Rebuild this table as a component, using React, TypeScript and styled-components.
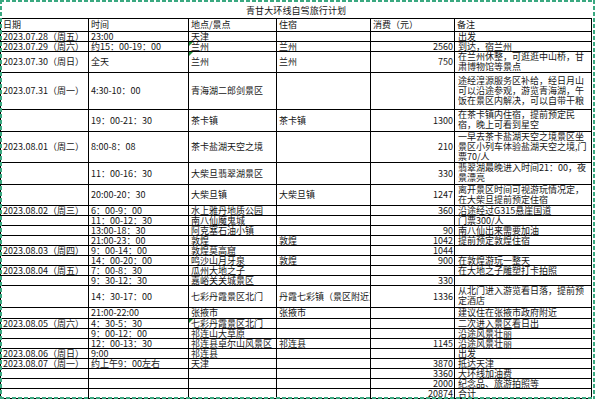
import styled, { createGlobalStyle } from "styled-components";

type Row = {
  h: number;
  date?: string;
  time?: string;
  place?: string;
  stay?: string;
  cost?: string;
  note?: string;
  mark?: boolean;
};

const rows: Row[] = [
  { h: 10, date: "2023.07.28（周五）", time: "23:00", place: "天津", note: "出发" },
  { h: 10, date: "2023.07.29（周六）", time: "约15：00-19：00", place: "兰州", stay: "兰州", cost: "2560", note: "到达，宿兰州", mark: true },
  { h: 21, date: "2023.07.30（周日）", time: "全天", place: "兰州", stay: "兰州", cost: "750", note: "在兰州休整，可逛逛中山桥，甘肃博物馆等景点", mark: true },
  { h: 37, date: "2023.07.31（周一）", time: "4:30-10：00", place: "青海湖二郎剑景区", note: "途经湟源服务区补给，经日月山可以沿途参观，游览青海湖，午饭在景区内解决，可以自带干粮" },
  { h: 22, time: "19：00-21：30", place: "茶卡镇", stay: "茶卡镇", cost: "1300", note: "在茶卡镇内住宿，提前预定民宿，晚上可看到星空" },
  { h: 31, date: "2023.08.01（周二）", time: "8:00-8：08", place: "茶卡盐湖天空之境", cost: "210", note: "一早去茶卡盐湖天空之境景区坐景区小列车体验盐湖天空之境,门票70/人" },
  { h: 22, time: "11：00-16：30", place: "大柴旦翡翠湖景区", cost: "330", note: "翡翠湖最晚进入时间21：00，夜景漂亮" },
  { h: 21, time: "20:00-20：30", place: "大柴旦镇", stay: "大柴旦镇", cost: "1247", note: "离开景区时间可视游玩情况定，在大柴旦提前预定住宿" },
  { h: 10, date: "2023.08.02（周三）", time: "6：00-9：00", place: "水上雅丹地质公园", cost: "360", note: "沿途经过G315悬崖国道" },
  { h: 10, time: "11：00-12：30", place: "南八仙魔鬼城", note: "门票300/人" },
  { h: 10, time: "13:00-18：30", place: "阿克塞石油小镇", cost: "90", note: "南八仙出来需要加油" },
  { h: 10, time: "21:00-23：00", place: "敦煌", stay: "敦煌", cost: "1042", note: "提前预定敦煌住宿" },
  { h: 10, date: "2023.08.03（周四）", time: "9：00-14：00", place: "敦煌莫高窟", cost: "1044" },
  { h: 10, time: "14：00-20：00", place: "鸣沙山月牙泉", stay: "敦煌", cost: "900", note: "在敦煌游玩一整天" },
  { h: 10, date: "2023.08.04（周五）", time: "7：00-8：30", place: "瓜州大地之子", note: "在大地之子雕塑打卡拍照" },
  { h: 10, time: "9：30-12：30", place: "嘉峪关关城景区", cost: "330" },
  { h: 22, time: "14：30-17：00", place: "七彩丹霞景区北门", stay: "丹霞七彩镇（景区附近）", cost: "1336", note: "从北门进入游览看日落，提前预定酒店" },
  { h: 11, time: "21:00-22:00", place: "张掖市", stay: "张掖市", note: "建议住在张掖市政府附近" },
  { h: 10, date: "2023.08.05（周六）", time: "4：30-5：30", place: "七彩丹霞景区北门", note: "二次进入景区看日出", mark: true },
  { h: 10, time: "9：00-12：00", place: "祁连山大草原", note: "沿途风景壮丽" },
  { h: 10, time: "12：00-13：30", place: "祁连县卓尔山风景区", stay: "祁连县", cost: "1145", note: "沿途风景壮丽" },
  { h: 10, date: "2023.08.06（周日）", time: "9:00", place: "祁连县", note: "出发" },
  { h: 10, date: "2023.08.07（周一）", time: "约上午9：00左右", place: "天津", cost: "3870", note: "抵达天津" },
  { h: 10, cost: "3360", note: "大环线加油费" },
  { h: 10, cost: "2000", note: "纪念品、旅游拍照等" },
  { h: 10, cost: "20874", note: "合计" },
];

const colWidths = [88, 100, 88, 94, 84, 137];
const heads = ["日期", "时间", "地点/景点", "住宿", "消费（元）", "备注"];

const App = () => {
  return (
    <Page>
      <GlobalStyle />
      <Sheet>
        <colgroup>
          {colWidths.map((w, i) => (
            <Col key={i} $w={w} />
          ))}
        </colgroup>
        <tbody>
          <SheetRow $h={18}>
            <TitleCell colSpan={6}>青甘大环线自驾旅行计划</TitleCell>
          </SheetRow>
          <SheetRow $h={13}>
            {heads.map((t) => (
              <HeadCell key={t}>{t}</HeadCell>
            ))}
          </SheetRow>
          {rows.map((r, i) => (
            <SheetRow key={i} $h={r.h}>
              <Cell>{r.date}</Cell>
              <Cell>{r.time}</Cell>
              <Cell>
                {r.mark && <ErrorMark />}
                {r.place}
              </Cell>
              <Cell>{r.stay}</Cell>
              <Cell $align="right">{r.cost}</Cell>
              <NoteCell $tight={r.h <= 11}>{r.note}</NoteCell>
            </SheetRow>
          ))}
        </tbody>
      </Sheet>
      <PageBreak />
    </Page>
  );
};

export default App;

const GlobalStyle = createGlobalStyle`
  body {
    margin: 0;
    background: #fff;
  }
`;

const Page = styled.div`
  position: relative;
  width: 596px;
  height: 400px;
  overflow: hidden;
  background: #fff;
`;

const Sheet = styled.table`
  border-collapse: collapse;
  table-layout: fixed;
  width: 591px;
  font-family: "Noto Sans CJK SC", "Noto Sans", sans-serif;
  font-size: 9px;
  line-height: 9px;
  color: #151515;
`;

const Col = styled.col<{ $w: number }>`
  width: ${(p) => p.$w}px;
`;

const SheetRow = styled.tr<{ $h: number }>`
  height: ${(p) => p.$h}px;
`;

const TitleCell = styled.td`
  padding: 3px 0 0;
  text-align: center;
  vertical-align: middle;
  letter-spacing: 0.1px;
`;

const HeadCell = styled.th`
  border: 1px solid #000;
  padding: 0 1px 0 2px;
  font-weight: 400;
  text-align: left;
  vertical-align: middle;
  white-space: nowrap;
  overflow: hidden;
`;

const Cell = styled.td<{ $align?: "left" | "right" }>`
  position: relative;
  border: 1px solid #000;
  padding: 0 1px 0 2px;
  text-align: ${(p) => p.$align ?? "left"};
  vertical-align: middle;
  white-space: nowrap;
  overflow: hidden;
`;

const NoteCell = styled(Cell)<{ $tight: boolean }>`
  padding: 0 3px 0 3px;
  white-space: normal;
  line-height: ${(p) => (p.$tight ? 9 : 10)}px;
`;

const ErrorMark = styled.span`
  position: absolute;
  top: 0;
  left: 0;
  width: 0;
  height: 0;
  border-top: 4px solid #1e8a3c;
  border-right: 4px solid transparent;
`;

const PageBreak = styled.div`
  position: absolute;
  top: 0;
  left: 0;
  width: 595px;
  height: 399px;
  pointer-events: none;
  background:
    repeating-linear-gradient(90deg, #3aa880 0 4px, transparent 4px 6px) top left / 100% 2px no-repeat,
    repeating-linear-gradient(90deg, #3aa880 0 4px, transparent 4px 6px) bottom left / 100% 2px no-repeat,
    repeating-linear-gradient(180deg, #3aa880 0 4px, transparent 4px 6px) top left / 2px 100% no-repeat,
    repeating-linear-gradient(180deg, #3aa880 0 4px, transparent 4px 6px) top right / 2px 100% no-repeat;
`;
